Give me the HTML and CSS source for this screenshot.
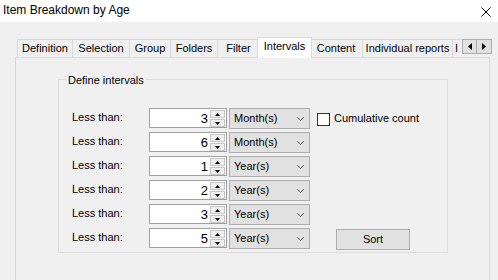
FILE: index.html
```html
<!DOCTYPE html>
<html>
<head>
<meta charset="utf-8">
<link rel="stylesheet" href="styles.css">
</head>
<body>
<div class="titlebar">
  <span class="title">Item Breakdown by Age</span>
  <svg class="close" width="10" height="10" viewBox="0 0 10 10"><path d="M0.5 0.5L9.5 9.5M9.5 0.5L0.5 9.5" stroke="#000" stroke-width="1" fill="none"/></svg>
</div>
<div class="main">
  <div class="tabbar">
    <div class="tabs">
      <div class="tab t-def">Definition</div>
      <div class="tab t-sel">Selection</div>
      <div class="tab t-grp">Group</div>
      <div class="tab t-fol">Folders</div>
      <div class="tab t-fil">Filter</div>
      <div class="tab t-int active">Intervals</div>
      <div class="tab t-con">Content</div>
      <div class="tab t-ind">Individual reports</div>
      <div class="tab t-more">I</div>
    </div>
    <div class="scroll">
      <div class="sbtn"><svg width="4" height="7" viewBox="0 0 4 7"><path d="M4 0L0 3.5L4 7Z" fill="#000"/></svg></div>
      <div class="sbtn"><svg width="4" height="7" viewBox="0 0 4 7"><path d="M0 0L4 3.5L0 7Z" fill="#000"/></svg></div>
    </div>
  </div>
  <div class="panel">
    <div class="group">
      <div class="legend">Define intervals</div>
      <div class="rows">
        <div class="row">
          <span class="lbl">Less than:</span>
          <div class="num"><span class="val">3</span><div class="spin"><div class="sb up"><svg width="7" height="4" viewBox="0 0 7 4"><path d="M0 4L3.5 0L7 4Z" fill="#000"/></svg></div><div class="sb dn"><svg width="7" height="4" viewBox="0 0 7 4"><path d="M0 0L3.5 4L7 0Z" fill="#000"/></svg></div></div></div>
          <div class="combo"><span>Month(s)</span><svg width="7" height="4" viewBox="0 0 7 4"><path d="M0.3 0.3L3.5 3.5L6.7 0.3" stroke="#555" fill="none"/></svg></div>
          <div class="check"><span class="box"></span><span class="ctext">Cumulative count</span></div>
        </div>
        <div class="row">
          <span class="lbl">Less than:</span>
          <div class="num"><span class="val">6</span><div class="spin"><div class="sb up"><svg width="7" height="4" viewBox="0 0 7 4"><path d="M0 4L3.5 0L7 4Z" fill="#000"/></svg></div><div class="sb dn"><svg width="7" height="4" viewBox="0 0 7 4"><path d="M0 0L3.5 4L7 0Z" fill="#000"/></svg></div></div></div>
          <div class="combo"><span>Month(s)</span><svg width="7" height="4" viewBox="0 0 7 4"><path d="M0.3 0.3L3.5 3.5L6.7 0.3" stroke="#555" fill="none"/></svg></div>
        </div>
        <div class="row">
          <span class="lbl">Less than:</span>
          <div class="num"><span class="val">1</span><div class="spin"><div class="sb up"><svg width="7" height="4" viewBox="0 0 7 4"><path d="M0 4L3.5 0L7 4Z" fill="#000"/></svg></div><div class="sb dn"><svg width="7" height="4" viewBox="0 0 7 4"><path d="M0 0L3.5 4L7 0Z" fill="#000"/></svg></div></div></div>
          <div class="combo"><span>Year(s)</span><svg width="7" height="4" viewBox="0 0 7 4"><path d="M0.3 0.3L3.5 3.5L6.7 0.3" stroke="#555" fill="none"/></svg></div>
        </div>
        <div class="row">
          <span class="lbl">Less than:</span>
          <div class="num"><span class="val">2</span><div class="spin"><div class="sb up"><svg width="7" height="4" viewBox="0 0 7 4"><path d="M0 4L3.5 0L7 4Z" fill="#000"/></svg></div><div class="sb dn"><svg width="7" height="4" viewBox="0 0 7 4"><path d="M0 0L3.5 4L7 0Z" fill="#000"/></svg></div></div></div>
          <div class="combo"><span>Year(s)</span><svg width="7" height="4" viewBox="0 0 7 4"><path d="M0.3 0.3L3.5 3.5L6.7 0.3" stroke="#555" fill="none"/></svg></div>
        </div>
        <div class="row">
          <span class="lbl">Less than:</span>
          <div class="num"><span class="val">3</span><div class="spin"><div class="sb up"><svg width="7" height="4" viewBox="0 0 7 4"><path d="M0 4L3.5 0L7 4Z" fill="#000"/></svg></div><div class="sb dn"><svg width="7" height="4" viewBox="0 0 7 4"><path d="M0 0L3.5 4L7 0Z" fill="#000"/></svg></div></div></div>
          <div class="combo"><span>Year(s)</span><svg width="7" height="4" viewBox="0 0 7 4"><path d="M0.3 0.3L3.5 3.5L6.7 0.3" stroke="#555" fill="none"/></svg></div>
        </div>
        <div class="row">
          <span class="lbl">Less than:</span>
          <div class="num"><span class="val">5</span><div class="spin"><div class="sb up"><svg width="7" height="4" viewBox="0 0 7 4"><path d="M0 4L3.5 0L7 4Z" fill="#000"/></svg></div><div class="sb dn"><svg width="7" height="4" viewBox="0 0 7 4"><path d="M0 0L3.5 4L7 0Z" fill="#000"/></svg></div></div></div>
          <div class="combo"><span>Year(s)</span><svg width="7" height="4" viewBox="0 0 7 4"><path d="M0.3 0.3L3.5 3.5L6.7 0.3" stroke="#555" fill="none"/></svg></div>
          <div class="btn">Sort</div>
        </div>
      </div>
    </div>
  </div>
</div>
</body>
</html>
```

FILE: styles.css
```css
* { box-sizing: border-box; }
html, body { margin: 0; padding: 0; }
body {
  width: 498px;
  height: 280px;
  overflow: hidden;
  background: #f0f0f0;
  font-family: "Liberation Sans", Arial, sans-serif;
  font-size: 11px;
  color: #000;
}
.titlebar {
  height: 22px;
  background: #fff;
  display: flex;
  align-items: center;
  justify-content: space-between;
  padding: 0 7px 0 3px;
}
.title {
  font-family: "Liberation Sans", Arial, sans-serif;
  font-size: 12px;
  line-height: 16px;
  margin-top: -2px;
}
.close { display: block; margin-top: 2px; }
.main {
  padding: 15px 8px 0 15px;
}
.tabbar {
  display: flex;
  height: 20px;
}
.tabs {
  flex: 0 0 447px;
  display: flex;
  align-items: flex-end;
  padding-left: 2px;
  overflow: hidden;
  height: 21px;
  position: relative;
  z-index: 2;
}
.tab {
  flex: 0 0 auto;
  height: 18px;
  border: 1px solid #d9d9d9;
  border-bottom: none;
  background: #f0f0f0;
  margin-right: -1px;
  text-align: center;
  line-height: 17px;
  white-space: nowrap;
  overflow: hidden;
  margin-bottom: 1px;
}
.t-def { width: 56px; }
.t-sel { width: 58px; }
.t-grp { width: 42px; }
.t-fol { width: 48px; }
.t-fil { width: 43px; }
.t-con { width: 54px; }
.t-ind { width: 91px; }
.t-more { width: 12px; text-align: left; padding-left: 2px; border-right: none; }
.tab.active {
  width: 55px;
  height: 21px;
  margin-left: -2px;
  margin-right: -3px;
  margin-bottom: 0;
  background: #fff;
  border-color: #d9d9d9;
  position: relative;
  z-index: 3;
}
.scroll {
  display: flex;
  margin-top: 2px;
  flex: 0 0 auto;
}
.sbtn {
  width: 15px;
  height: 15px;
  border: 1px solid #adadad;
  background: #e1e1e1;
  display: flex;
  align-items: center;
  justify-content: center;
}
.sbtn + .sbtn { border-left: none; width: 15px; }
.sbtn svg { display: block; }
.panel {
  height: 230px;
  border: 1px solid #d9d9d9;
  background: #f0f0f0;
  padding: 21px 0 0 42px;
}
.group {
  width: 390px;
  height: 174px;
  border: 1px solid #dcdcdc;
  padding: 0 0 0 13px;
}
.legend {
  display: inline-block;
  margin-left: -6px;
  padding: 0 2px;
  background: #f0f0f0;
  height: 13px;
  line-height: 13px;
  margin-top: -6px;
  vertical-align: top;
}
.rows {
  margin-top: 16px;
  display: flex;
  flex-direction: column;
  gap: 3px;
}
.row {
  display: flex;
  align-items: flex-start;
  height: 21px;
}
.lbl {
  width: 77px;
  line-height: 18px;
}
.num {
  width: 78px;
  height: 20px;
  border: 1px solid #a0a0a0;
  background: #fff;
  display: flex;
  justify-content: flex-end;
  padding: 1px 1px 0 0;
}
.val {
  font-size: 13px;
  line-height: 17px;
  margin-right: 2px;
}
.spin {
  width: 15px;
  height: 17px;
  display: flex;
  flex-direction: column;
  gap: 1px;
}
.sb {
  flex: 1;
  border: 1px solid #c4c4c4;
  background: #f0f0f0;
  display: flex;
  align-items: center;
  justify-content: center;
}
.sb svg { display: block; width: 5px; height: 3px; }
.combo {
  width: 81px;
  height: 21px;
  margin-left: 2px;
  border: 1px solid #adadad;
  background: #e1e1e1;
  display: flex;
  justify-content: space-between;
  align-items: center;
  padding: 0 5px 0 4px;
  line-height: 19px;
}
.combo svg { display: block; margin-top: 1px; }
.check {
  display: flex;
  align-items: flex-start;
  margin-left: 7px;
}
.box {
  width: 13px;
  height: 13px;
  border: 1px solid #333;
  background: #fff;
  margin-top: 5px;
}
.ctext {
  margin-left: 4px;
  line-height: 20px;
}
.btn {
  width: 74px;
  height: 21px;
  margin: 1px 0 0 26px;
  border: 1px solid #adadad;
  background: #e1e1e1;
  text-align: center;
  line-height: 19px;
}
```
